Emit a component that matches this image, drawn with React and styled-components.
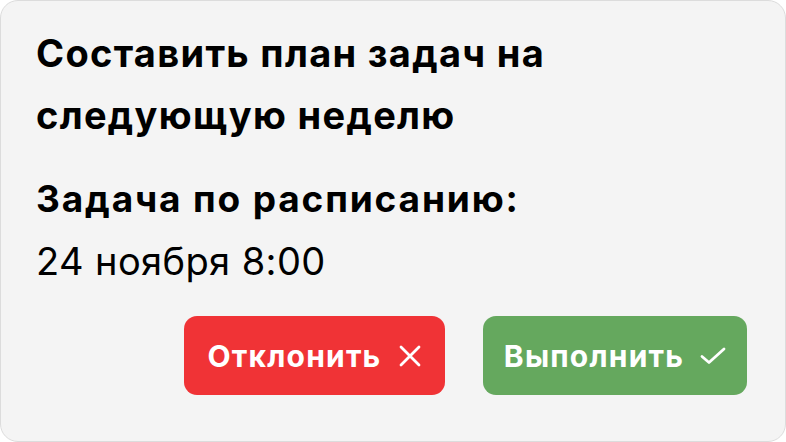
import React from "react";
import styled, { createGlobalStyle } from "styled-components";

const GlobalStyle = createGlobalStyle`
  html, body {
    margin: 0;
    padding: 0;
    background: #ffffff;
  }
  body {
    font-family: Inter, "Noto Sans", sans-serif;
  }
`;

const Card = styled.div`
  box-sizing: border-box;
  width: 786px;
  height: 442px;
  background: #f4f4f4;
  border: 1px solid #dcdcdc;
  border-radius: 18px;
  padding: 21px 38px 46px 35px;
  display: flex;
  flex-direction: column;
`;

const Title = styled.h1`
  margin: 0;
  font-size: 38px;
  line-height: 62px;
  font-weight: 700;
  color: #000;
  letter-spacing: 1.3px;
`;

const Label = styled.div`
  margin-top: 31px;
  font-size: 37px;
  line-height: 44px;
  font-weight: 700;
  color: #000;
  letter-spacing: 1.85px;
`;

const DateText = styled.div`
  margin-top: 18px;
  font-size: 38px;
  line-height: 44px;
  font-weight: 400;
  color: #000;
  letter-spacing: 0.4px;
`;

const Actions = styled.div`
  margin-top: auto;
  display: flex;
  justify-content: flex-end;
  gap: 38px;
`;

const Button = styled.button`
  display: flex;
  align-items: center;
  justify-content: center;
  gap: 16px;
  width: ${(p) => p.$w}px;
  height: 79px;
  border: none;
  border-radius: 13px;
  background: ${(p) => p.$bg};
  color: #fff;
  font-family: Inter, "Noto Sans", sans-serif;
  font-size: 30px;
  font-weight: 700;
  letter-spacing: 1.2px;
  cursor: pointer;
  padding: 0;
`;

export default function App() {
  return (
    <>
      <GlobalStyle />
      <Card>
        <Title>
          Составить план задач на
          <br />
          следующую неделю
        </Title>
        <Label>Задача по расписанию:</Label>
        <DateText>24 ноября 8:00</DateText>
        <Actions>
          <Button $bg="#f03336" $w={261}>
            Отклонить
            <svg width="24" height="24" viewBox="0 0 24 24">
              <path d="M3 3 L21 21 M21 3 L3 21" stroke="#fff" strokeWidth="2.8" strokeLinecap="round" />
            </svg>
          </Button>
          <Button $bg="#65a85e" $w={264}>
            Выполнить
            <svg width="26" height="18" viewBox="0 0 26 18">
              <path d="M2 9.5 L9 15.5 L24 2" stroke="#fff" strokeWidth="2.8" fill="none" strokeLinecap="round" strokeLinejoin="round" />
            </svg>
          </Button>
        </Actions>
      </Card>
    </>
  );
}
